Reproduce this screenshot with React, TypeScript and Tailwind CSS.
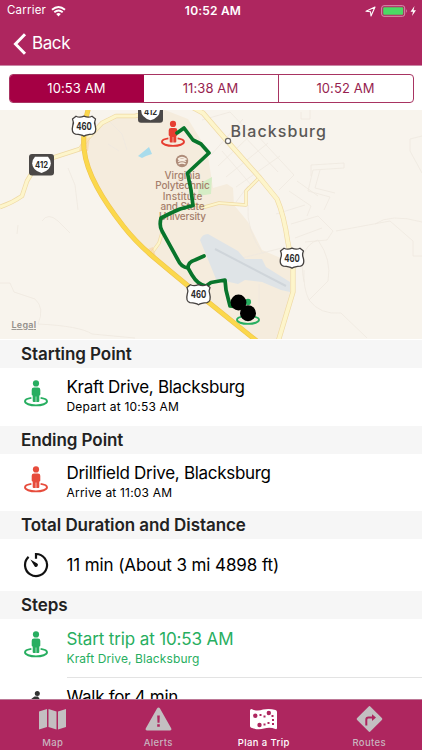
import { ReactNode } from "react";

type Stop = {
  title: string;
  name: string;
  time: string;
  color: string;
};

const times = ["10:53 AM", "11:38 AM", "10:52 AM"];

const stops: Stop[] = [
  {
    title: "Starting Point",
    name: "Kraft Drive, Blacksburg",
    time: "Depart at 10:53 AM",
    color: "#27ae60",
  },
  {
    title: "Ending Point",
    name: "Drillfield Drive, Blacksburg",
    time: "Arrive at 11:03 AM",
    color: "#e74c3c",
  },
];

function PersonShape({ color }: { color: string }) {
  return (
    <g>
      <path
        d="M7.4 17.9 C3 18.5 1 19.8 1 21.3 C1 23.7 6 25.4 12 25.4 C18 25.4 23 23.7 23 21.3 C23 19.8 21 18.5 16.6 17.9"
        fill="none"
        stroke={color}
        strokeWidth="1.9"
      />
      <circle cx="12" cy="3.4" r="3.1" fill={color} />
      <path
        d="M10 7.4 H14 Q16.3 7.4 16.3 9.8 V14.4 Q16.3 15.4 15.3 15.4 V21 Q15.3 22 14.3 22 H12.3 V16.5 H11.7 V22 H9.7 Q8.7 22 8.7 21 V15.4 Q7.7 15.4 7.7 14.4 V9.8 Q7.7 7.4 10 7.4 Z"
        fill={color}
      />
    </g>
  );
}

function PersonIcon({ color }: { color: string }) {
  return (
    <svg width="24" height="27" viewBox="0 0 24 27">
      <PersonShape color={color} />
    </svg>
  );
}

function TimerIcon() {
  return (
    <svg width="26" height="26" viewBox="0 0 26 26" fill="none">
      <path d="M13 6.8 V2 A11 11 0 1 1 5.6 4.9" stroke="#111" strokeWidth="2.2" />
      <path d="M7.4 7.6 L14.3 11.6 A1.9 1.9 0 0 1 11.7 14.4 Z" fill="#111" />
    </svg>
  );
}

function UsShield({ x, y }: { x: number; y: number }) {
  return (
    <g transform={`translate(${x} ${y})`}>
      <path
        d="M-8 -9.800 Q-4.500 -7.800 0 -9.800 Q4.500 -7.800 8 -9.800 L11.500 -7 Q9.800 -3.500 11.300 0 Q13 6.500 8.500 8.200 Q2.500 8.500 0 10.300 Q-2.500 8.500 -8.500 8.200 Q-13 6.500 -11.300 0 Q-9.800 -3.500 -11.500 -7 Z"
        fill="#fff"
        stroke="#45413f"
        strokeWidth="1.300"
        strokeLinejoin="round"
      />
      <text y="3.700" textAnchor="middle" fontSize="10" fontWeight="700" fill="#2b2b2b" textLength="15.500" lengthAdjust="spacingAndGlyphs">
        460
      </text>
    </g>
  );
}

function StateShield({ x, y }: { x: number; y: number }) {
  return (
    <g transform={`translate(${x} ${y})`}>
      <rect x="-12.500" y="-10.800" width="25" height="21.600" rx="3" fill="#4b4847" />
      <path d="M-6.500 -8 H6.500 Q9.300 -5 9.300 -1.500 Q9.300 5.500 0 8.300 Q-9.300 5.500 -9.300 -1.500 Q-9.300 -5 -6.500 -8 Z" fill="#fff" />
      <text y="3" textAnchor="middle" fontSize="9" fontWeight="700" fill="#2b2b2b" textLength="13" lengthAdjust="spacingAndGlyphs">
        412
      </text>
    </g>
  );
}

function Road({ d, width = 3.2 }: { d: string; width?: number }) {
  return (
    <g fill="none" strokeLinejoin="round">
      <path d={d} stroke="#efd9a4" strokeWidth={width + 1.3} />
      <path d={d} stroke="#fdf5cb" strokeWidth={width} />
    </g>
  );
}

function RouteMap() {
  const campus = ["Virginia", "Polytechnic", "Institute", "and State", "University"];
  const campusWidths = [36, 54.5, 39.5, 44, 47];
  const highway =
    "M89 106 L85 122 Q83 135 84 149 Q86 167 97 187 Q106 204 124 227 Q135 241 151 255 Q170 271 187 285 L258 342";

  return (
    <svg width="422" height="229" viewBox="0 110 422 229" className="block shrink-0" fontFamily="Inter, sans-serif">
      <rect y="110" width="422" height="229" fill="#f8f4ed" />
      <path
        d="M84 148 L102 124 L117 116 L165 110 L188 119 L207 150 L213 188 L227 184 L233 188 L234 205 L248 222 L262 250 L290 262 L293 280 L292 300 L279 340 L256 340 L187 285 L151 255 L124 227 L97 187 Z"
        fill="#f5ecdd"
      />
      {/* Minor streets */}
      <g fill="none" stroke="#efe9e0" strokeWidth="0.8">
        <path d="M68 168 L75 185 L78 210 M42 221 Q48 212 58 221 L70 233 M110 122 L122 134 L127 150 M108 144 L119 151 M18 225 L17 234" />
        <path d="M211 155 L243 119 M218 166 L257 129 M226 177 L268 143 M236 187 L280 156 M222 151 L252 186 M232 144 L264 180 M244 136 L278 172 M255 133 L294 175 L279 190 M202 120 L230 112 L249 132" />
        <path d="M311 176 V165 L344 163 V168 L313 170 L308 191 L330 197 L324 210 M320 170 L315 188 L335 193 M289 191 L311 206 L307 216 M297 181 L318 196 M301 112 V119 H310 V110 M422 173 L410 151 V139 L422 136" />
        <path d="M291 224 L318 216 L333 231 L327 240 L305 242 M295 238 L322 228 M336 231 L390 221 L413 241 V256 H422 M304 282 Q297 247 318 240 Q332 260 328 281 L309 300 Q303 288 304 270 M309 300 Q320 315 341 313 L367 338" />
        <path d="M0 283 H10 L14 292 L35 299 Q45 308 38 324 Q80 326 92 334 L135 338 M375 224 Q390 213 422 222 M248 205 Q246 230 263 254 M218 264 L282 248 M259 284 V310 M248 186 L236 202 M276 214 L305 205" />
      </g>
      <path d="M199 184 L212 177 L211 194 L198 196 Z" fill="#d5edc5" />
      <path d="M138 156 L149 147 L152 154 L146 156 L142 158 Z" fill="#a9dcec" />
      <path
        d="M200 240 Q202 234 208 234 L238 251 L245 259 L262 259 L266 267 L290 282 V292 L281 290 L262 282 L245 280 L238 284 L216 279 Z"
        fill="#dfe4e7"
      />
      <path d="M215 249 L286 286" stroke="#cfd5da" strokeWidth="2" />
      {/* Secondary roads */}
      <Road d="M0 207 Q12 203 22 196 L27 181 L36 166 L52 158 L80 149 L88 138 L102 123 L116 116 L135 116 L152 112" />
      <Road d="M190 106 L203 113 L215 127 L228 142 L260 178 L277 199 Q284 215 288 243 L293 266 V292 L278 342" width={3.8} />
      <Road d="M258 179 L246 191 V205 L219 203 L205 207 L190 204" width={2.2} />
      <Road d="M151 254 L159 243 L162 233" width={2.2} />
      <path d="M79 151 L82 139 L90 137 L88 151 Z M143 251 L153 247 L157 260 Z" fill="#f8cf9b" opacity=".55" />
      <path d={highway} fill="none" stroke="#efc34e" strokeWidth="5" />
      <path d={highway} fill="none" stroke="#fbd84c" strokeWidth="3.800" />

      <UsShield x={84} y={126} />
      <UsShield x={292} y={258} />
      <StateShield x={41.5} y={164.700} />
      <StateShield x={150.500} y={112} />

      {/* Place labels */}
      <circle cx="182" cy="161" r="6.200" fill="#ae8c79" />
      <path d="M178 159 Q182 156 186 159 Q182 160 178 159 M178 161.500 Q182 159.500 186 161.500 M178.500 164 Q182 162 185.500 164" fill="none" stroke="#f8eee2" strokeWidth="1.300" />
      <g fill="#a67f6c" fontSize="10" fontWeight="500" textAnchor="middle">
        {campus.map((line, i) => (
          <text key={line} x="182.500" y={179.300 + i * 10.100} textLength={campusWidths[i]}>
            {line}
          </text>
        ))}
      </g>
      <circle cx="228" cy="141" r="2.600" fill="#fff" stroke="#6c6864" strokeWidth="1.200" />
      <text x="230.500" y="137" fontSize="16" fontWeight="500" fill="#5b5856" textLength="95.500">
        Blacksburg
      </text>
      <text x="11.500" y="328" fontSize="9" fontWeight="600" fill="#94908b" textLength="24.500" textDecoration="underline">
        Legal
      </text>

      {/* Trip route */}
      <g transform="translate(161 120.500)">
        <PersonShape color="#e63e31" />
      </g>
      <g fill="none" stroke="#08752b" strokeWidth="3.700" strokeLinejoin="round" strokeLinecap="round">
        <path d="M177 133 L184 128 L193 140 L201 144 L209 153 L187.500 173 L191 190 L193 205.500 L180 209 L171 213 L161 218 Q159 226 162 231 L178 260 Q181 267 188 268 L192 275 Q198 285 206 286 L211 282.500 L225 280 L226 290 L230 306 L238 307" />
        <path d="M188 268 Q188 262 195 260 L204 256" />
      </g>
      <UsShield x={198.500} y={294.500} />
      <g transform="translate(236 298.500)">
        <PersonShape color="#27ae60" />
      </g>
      <circle cx="238.500" cy="302.500" r="7.900" />
      <circle cx="248" cy="313.200" r="8" />
    </svg>
  );
}

function SectionHeader({ children }: { children: ReactNode }) {
  return (
    <h2 className="h-7 shrink-0 bg-[#f6f6f6] pl-[21px] text-[17px] leading-7 font-semibold tracking-[-0.070px] text-[#222]">
      {children}
    </h2>
  );
}

function StopRow({ name, time, color, tinted }: { name: string; time: string; color: string; tinted?: boolean }) {
  return (
    <div className="flex h-[57.5px] shrink-0 pl-6" style={{ color: tinted ? color : "#000" }}>
      <div className="w-[42.5px] pt-3">
        <PersonIcon color={color} />
      </div>
      <div className={tinted ? "pt-[9px]" : "pt-2"}>
        <p className={`text-[17px] leading-[22px] ${tinted ? "tracking-[-0.13px]" : "tracking-[-0.3px]"}`}>{name}</p>
        <p className={`text-[12px] leading-[17px] ${tinted ? "tracking-[0.1px]" : "tracking-[0.2px]"}`}>{time}</p>
      </div>
    </div>
  );
}

function StatusBar() {
  return (
    <div className="relative flex h-[22px] items-center justify-between px-[7px] text-[11.500px]">
      <div className="flex items-center gap-[5px]">
        <span className="tracking-[0.2px]">Carrier</span>
        <svg width="15" height="11" viewBox="0 0 15 11" fill="none" stroke="#fff" strokeWidth="1.900">
          <path d="M1 3.800 Q7.500 -1.800 14 3.800 M3.300 6.200 Q7.500 2.600 11.700 6.200" />
          <path d="M5.200 8 Q7.500 6 9.800 8 L7.500 10.400 Z" fill="#fff" stroke="none" />
        </svg>
      </div>
      <span className="absolute left-[213px] -translate-x-1/2 text-[12px] font-semibold whitespace-nowrap tracking-[0.2px]">
        10:52 AM
      </span>
      <div className="-mr-[2px] flex items-center">
        <svg width="11" height="11" viewBox="0 0 11 11" fill="none" stroke="#fff" strokeWidth="1.100" strokeLinejoin="round">
          <path d="M1 5.300 L10 1 L6 10 L5.500 5.700 Z" />
        </svg>
        <svg width="36" height="12" viewBox="0 0 36 12" className="ml-[5px]">
          <rect x=".700" y=".700" width="23" height="10.600" rx="2.200" fill="none" stroke="#d893b0" />
          <rect x="2.200" y="2.200" width="20" height="7.600" rx="1" fill="#4cd964" />
          <path d="M25.200 4 Q27 6 25.200 8 Z" fill="#d893b0" />
          <path d="M33.500 1 L29.500 6.700 H32 L31 11 L35 5.200 H32.500 Z" fill="#fff" />
        </svg>
      </div>
    </div>
  );
}

function TabBar() {
  const tabs = [
    {
      label: "Map",
      icon: <path d="M0 3.500 L8 1 V19 L0 21.500 Z M9.500 1 L17.500 3.500 V21.500 L9.500 19 Z M19 3.500 L27 1 V19 L19 21.500 Z" />,
    },
    {
      label: "Alerts",
      icon: (
        <path
          fillRule="evenodd"
          d="M12 .600 Q13.500 -1.500 15 .600 L26.300 20.500 Q27 22.500 25 22.500 H2 Q0 22.500 .700 20.500 Z M12.200 7.500 L12.500 14.800 H14.500 L14.800 7.500 Z M12.200 16.200 V18.700 H14.800 V16.200 Z"
        />
      ),
    },
    {
      label: "Plan a Trip",
      icon: (
        <>
          <path d="M0 2.500 Q0 1 1.500 1 Q7 3.800 13 1.600 Q19 0 25.500 2 Q27 2.500 27 4 V20 Q27 21.500 25.500 21 Q20 18.800 14 20.500 Q8 22.300 1.200 19.800 Q0 19.300 0 18 Z" />
          <g fill="#ae265f">
            <circle cx="5.300" cy="7.800" r="2.200" />
            <circle cx="18.800" cy="5" r="2.200" />
            <circle cx="9.500" cy="17" r="2.200" />
            <path d="M9.500 6 h2 v2 h-2z M13.500 7.500 h2 v2 h-2z M21.500 7 h2 v2 h-2z M22 11 h2 v2 h-2z M22 15 h2 v2 h-2z M17.500 14 h2 v2 h-2z M13.500 15.500 h2 v2 h-2z" />
          </g>
        </>
      ),
    },
    {
      label: "Routes",
      icon: (
        <>
          <rect x="4" y="1.500" width="19" height="19" rx="1.500" transform="rotate(45 13.500 11)" />
          <path d="M10.300 17.500 V11.800 Q10.300 9.500 12.500 9.500 H17" fill="none" stroke="#ae265f" strokeWidth="2" />
          <path d="M16 6.200 L20 9.600 L16 13 Z" fill="#ae265f" />
        </>
      ),
    },
  ];

  return (
    <nav className="flex h-[51px] shrink-0 border-t border-[#bd7997] bg-[#ae265f]">
      {tabs.map((tab) => (
        <button
          key={tab.label}
          className={`flex flex-1 flex-col items-center pt-2 text-[9.500px] font-medium tracking-[0.4px] ${
            tab.label === "Plan a Trip" ? "text-white" : "text-[#c9b5bf]"
          }`}
        >
          <svg
            width="27"
            height="23"
            viewBox="0 0 27 23"
            className="overflow-visible"
            fill={tab.label === "Plan a Trip" ? "#fff" : "#c3bfc1"}
          >
            {tab.icon}
          </svg>
          <span className="mt-[5px] leading-[14px]">{tab.label}</span>
        </button>
      ))}
    </nav>
  );
}

export default function App() {
  return (
    <div className="flex h-[750px] w-[422px] flex-col overflow-hidden bg-white font-[Inter,sans-serif]">
      <header className="h-[66px] shrink-0 border-b border-[#c987a5] bg-[#ae265f] text-white">
        <StatusBar />
        <button className="flex h-[43px] items-center pl-[13px] text-[17px]">
          <svg width="14" height="22" viewBox="0 0 14 22" fill="none" stroke="#fff" strokeWidth="3">
            <path d="M12 1.300 L2.500 11 L12 20.700" />
          </svg>
          <span className="ml-[5px] tracking-[-0.4px]">Back</span>
        </button>
      </header>

      {/* Departure options */}
      <div className="h-[44px] shrink-0 px-[8.500px] pt-[7.500px]">
        <div className="flex h-[29.500px] overflow-hidden rounded-[4px] border border-[#a83462] text-[13px] text-[#971f50]">
          {times.map((time, i) => (
            <button
              key={time}
              className={`flex-1 tracking-[0.1px] ${i === 0 ? "bg-[#a50044] text-white" : ""} ${
                i === 2 ? "border-l border-[#a83462]" : ""
              }`}
            >
              {time}
            </button>
          ))}
        </div>
      </div>

      <RouteMap />

      <main className="flex min-h-0 flex-1 flex-col overflow-hidden pt-px">
        {stops.map((stop) => (
          <section key={stop.title}>
            <SectionHeader>{stop.title}</SectionHeader>
            <StopRow name={stop.name} time={stop.time} color={stop.color} />
          </section>
        ))}
        <SectionHeader>Total Duration and Distance</SectionHeader>
        <div className="flex h-[52px] shrink-0 items-center pl-[23px]">
          <TimerIcon />
          <p className="ml-[17.500px] pt-0.5 text-[17px] tracking-[-0.1px]">11 min (About 3 mi 4898 ft)</p>
        </div>
        <SectionHeader>Steps</SectionHeader>
        <StopRow name="Start trip at 10:53 AM" time="Kraft Drive, Blacksburg" color="#27ae60" tinted />
        <div className="flex h-14 shrink-0 pl-6">
          <div className="w-[42.500px] pt-3">
            <svg width="24" height="27" viewBox="0 0 24 27" fill="#333">
              <circle cx="13.300" cy="4.500" r="2.500" />
              <path d="M6.500 10.500 L10.500 7.500 H14 L17 12 L14 15 L11 26 H8 L10 14 L9 11 L6 14 Z" />
            </svg>
          </div>
          <p className="flex-1 border-t border-[#e3e3e3] pt-2 text-[17px] leading-[22px] tracking-[-0.3px]">Walk for 4 min</p>
        </div>
      </main>

      <TabBar />
    </div>
  );
}
